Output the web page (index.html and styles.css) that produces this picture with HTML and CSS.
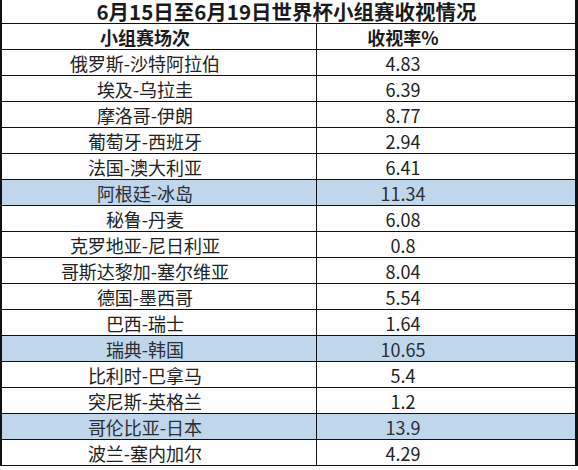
FILE: index.html
```html
<!DOCTYPE html>
<html lang="zh-CN">
<head>
<meta charset="utf-8">
<title>世界杯小组赛收视情况</title>
<link rel="stylesheet" href="styles.css">
</head>
<body>
<table class="sheet">
  <colgroup>
    <col class="col-match">
    <col class="col-rate">
  </colgroup>
  <thead>
    <tr class="row-title"><th colspan="2" class="title">6月15日至6月19日世界杯小组赛收视情况</th></tr>
    <tr class="row-head"><th class="c-match">小组赛场次</th><th class="c-rate">收视率%</th></tr>
  </thead>
  <tbody>
    <tr><td class="c-match">俄罗斯-沙特阿拉伯</td><td class="c-rate">4.83</td></tr>
    <tr><td class="c-match">埃及-乌拉圭</td><td class="c-rate">6.39</td></tr>
    <tr><td class="c-match">摩洛哥-伊朗</td><td class="c-rate">8.77</td></tr>
    <tr><td class="c-match">葡萄牙-西班牙</td><td class="c-rate">2.94</td></tr>
    <tr><td class="c-match">法国-澳大利亚</td><td class="c-rate">6.41</td></tr>
    <tr class="hl"><td class="c-match">阿根廷-冰岛</td><td class="c-rate">11.34</td></tr>
    <tr><td class="c-match">秘鲁-丹麦</td><td class="c-rate">6.08</td></tr>
    <tr><td class="c-match">克罗地亚-尼日利亚</td><td class="c-rate">0.8</td></tr>
    <tr><td class="c-match">哥斯达黎加-塞尔维亚</td><td class="c-rate">8.04</td></tr>
    <tr><td class="c-match">德国-墨西哥</td><td class="c-rate">5.54</td></tr>
    <tr><td class="c-match">巴西-瑞士</td><td class="c-rate">1.64</td></tr>
    <tr class="hl"><td class="c-match">瑞典-韩国</td><td class="c-rate">10.65</td></tr>
    <tr><td class="c-match">比利时-巴拿马</td><td class="c-rate">5.4</td></tr>
    <tr><td class="c-match">突尼斯-英格兰</td><td class="c-rate">1.2</td></tr>
    <tr class="hl"><td class="c-match">哥伦比亚-日本</td><td class="c-rate">13.9</td></tr>
    <tr><td class="c-match">波兰-塞内加尔</td><td class="c-rate">4.29</td></tr>
  </tbody>
</table>
</body>
</html>
```

FILE: styles.css
```css
html, body {
  margin: 0;
  padding: 0;
  background: #ffffff;
}

.sheet {
  width: 578px;
  border-collapse: separate;
  border-spacing: 0;
  table-layout: fixed;
  border-left: 2px solid #111;
  border-right: 3px solid #111;
  font-family: "Noto Sans CJK SC", "Noto Sans", sans-serif;
  color: #222;
}

.col-match { width: 315px; }

.sheet th,
.sheet td {
  padding: 0;
  border-bottom: 1px solid #111;
  text-align: center;
  vertical-align: middle;
  white-space: nowrap;
  line-height: 1;
}

.sheet .c-match {
  border-right: 1px solid #111;
  padding-right: 28px;
}

.sheet .c-rate {
  padding-right: 86px;
}

.row-title th {
  height: 23px;
  font-size: 20.5px;
  font-weight: 700;
  color: #1a1a1a;
  padding-right: 4px;
}

.row-head th {
  height: 25px;
  font-size: 18px;
  font-weight: 700;
  color: #1a1a1a;
}

.sheet td {
  height: 25px;
  font-size: 18px;
  font-weight: 400;
}

.hl td {
  background: #c0d6ea;
  color: #2a2f36;
}
```
